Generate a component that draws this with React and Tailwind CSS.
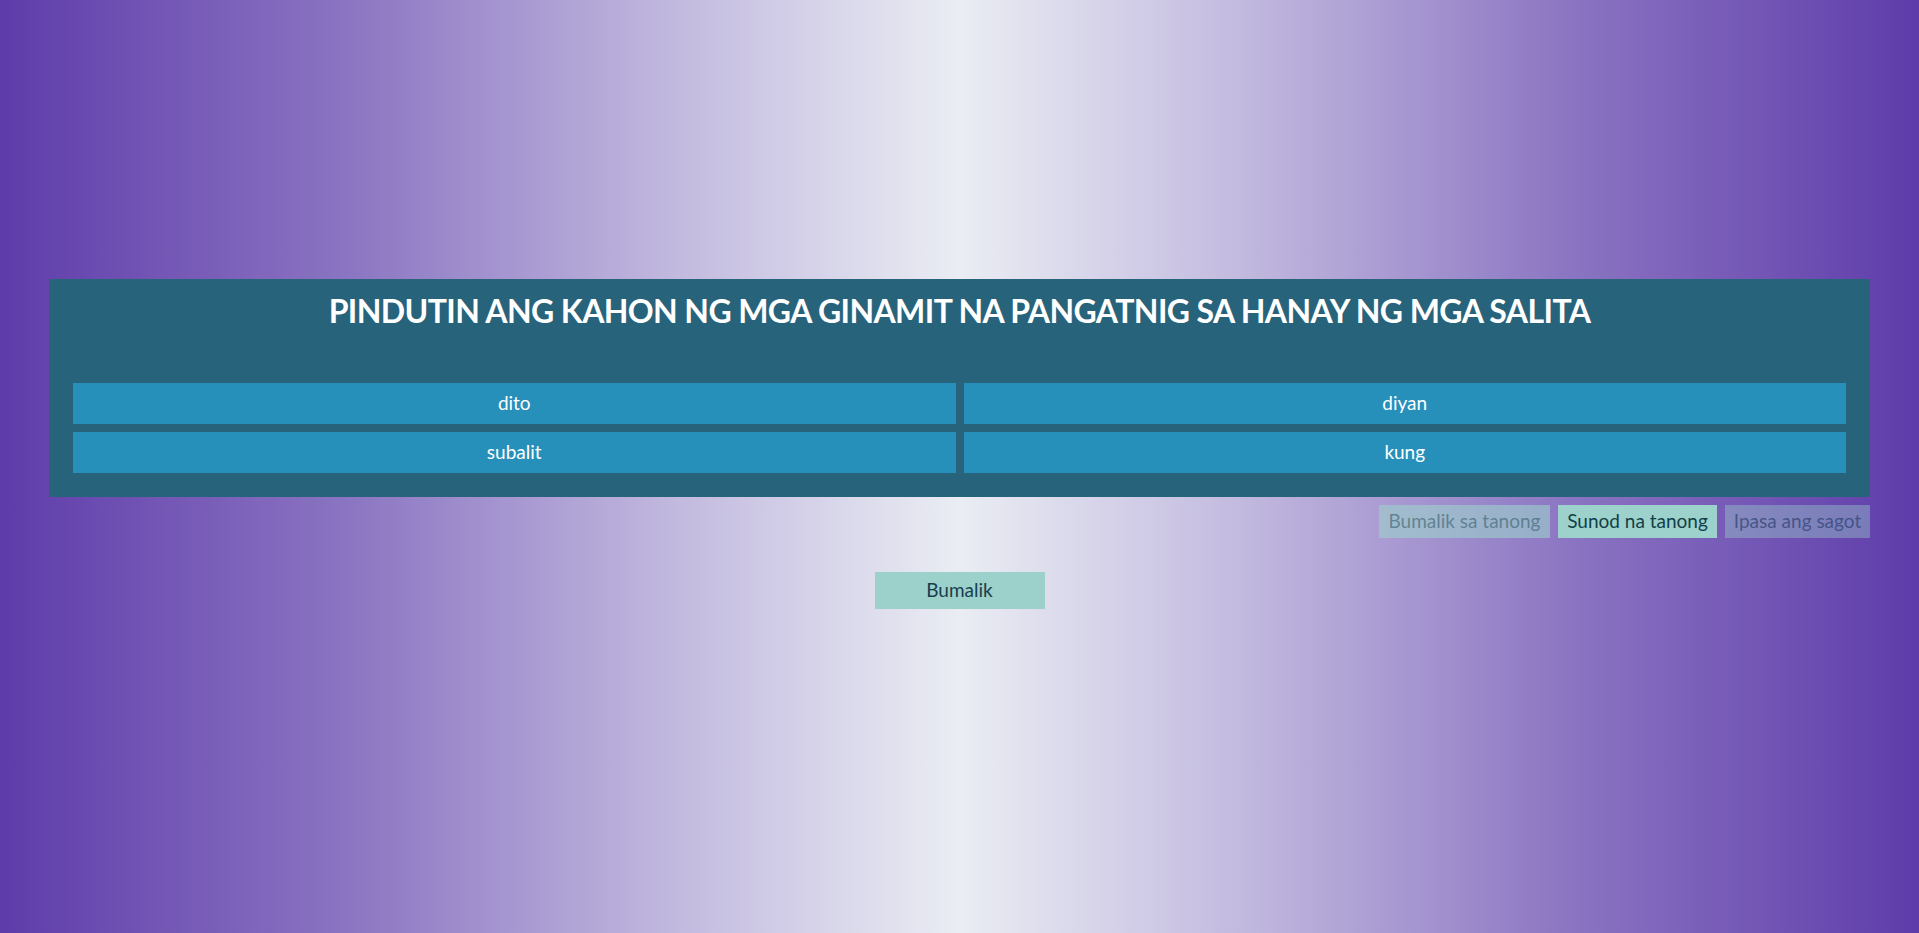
import { useState } from "react";

const options = ["dito", "diyan", "subalit", "kung"];

export default function App() {
  const [picked, setPicked] = useState([]);

  const toggle = (word) =>
    setPicked((p) => (p.includes(word) ? p.filter((w) => w !== word) : [...p, word]));

  return (
    <div
      className="min-h-screen w-full bg-[linear-gradient(to_right,#5e3caa_0%,#8b74c2_18%,#c4bce0_36%,#eaedf3_50%,#c4bce0_64%,#8b74c2_82%,#5e3caa_100%)] px-[49px] pt-[279px] font-['Lato',sans-serif]"
    >
      <div className="bg-[#28637c] px-6 pt-[11px] pb-6">
        <h1 className="text-center text-[32px] font-bold leading-[42px] tracking-[-0.6px] text-white">
          PINDUTIN ANG KAHON NG MGA GINAMIT NA PANGATNIG SA HANAY NG MGA SALITA
        </h1>
        <div className="mt-[51px] grid grid-cols-2 gap-2">
          {options.map((word) => (
            <button
              key={word}
              onClick={() => toggle(word)}
              className={`h-[41px] text-[19px] text-white ${
                picked.includes(word) ? "bg-[#1d7aa0]" : "bg-[#2690bb]"
              }`}
            >
              {word}
            </button>
          ))}
        </div>
      </div>

      <div className="mt-2 flex justify-end gap-2">
        <button className="h-[33px] w-[171px] bg-[#9cd2cb]/60 text-[19px] text-[#1d4d57]/50">
          Bumalik sa tanong
        </button>
        <button className="h-[33px] w-[159px] bg-[#9cd2cb] text-[19px] text-[#123f48]">
          Sunod na tanong
        </button>
        <button className="h-[33px] w-[145px] bg-[#9cd2cb]/40 text-[19px] text-[#2a3f70]/70">
          Ipasa ang sagot
        </button>
      </div>

      <div className="mt-[34px] flex justify-center">
        <button className="h-[37px] w-[170px] bg-[#9cd0cb] text-[19px] text-[#173f4c]">
          Bumalik
        </button>
      </div>
    </div>
  );
}
